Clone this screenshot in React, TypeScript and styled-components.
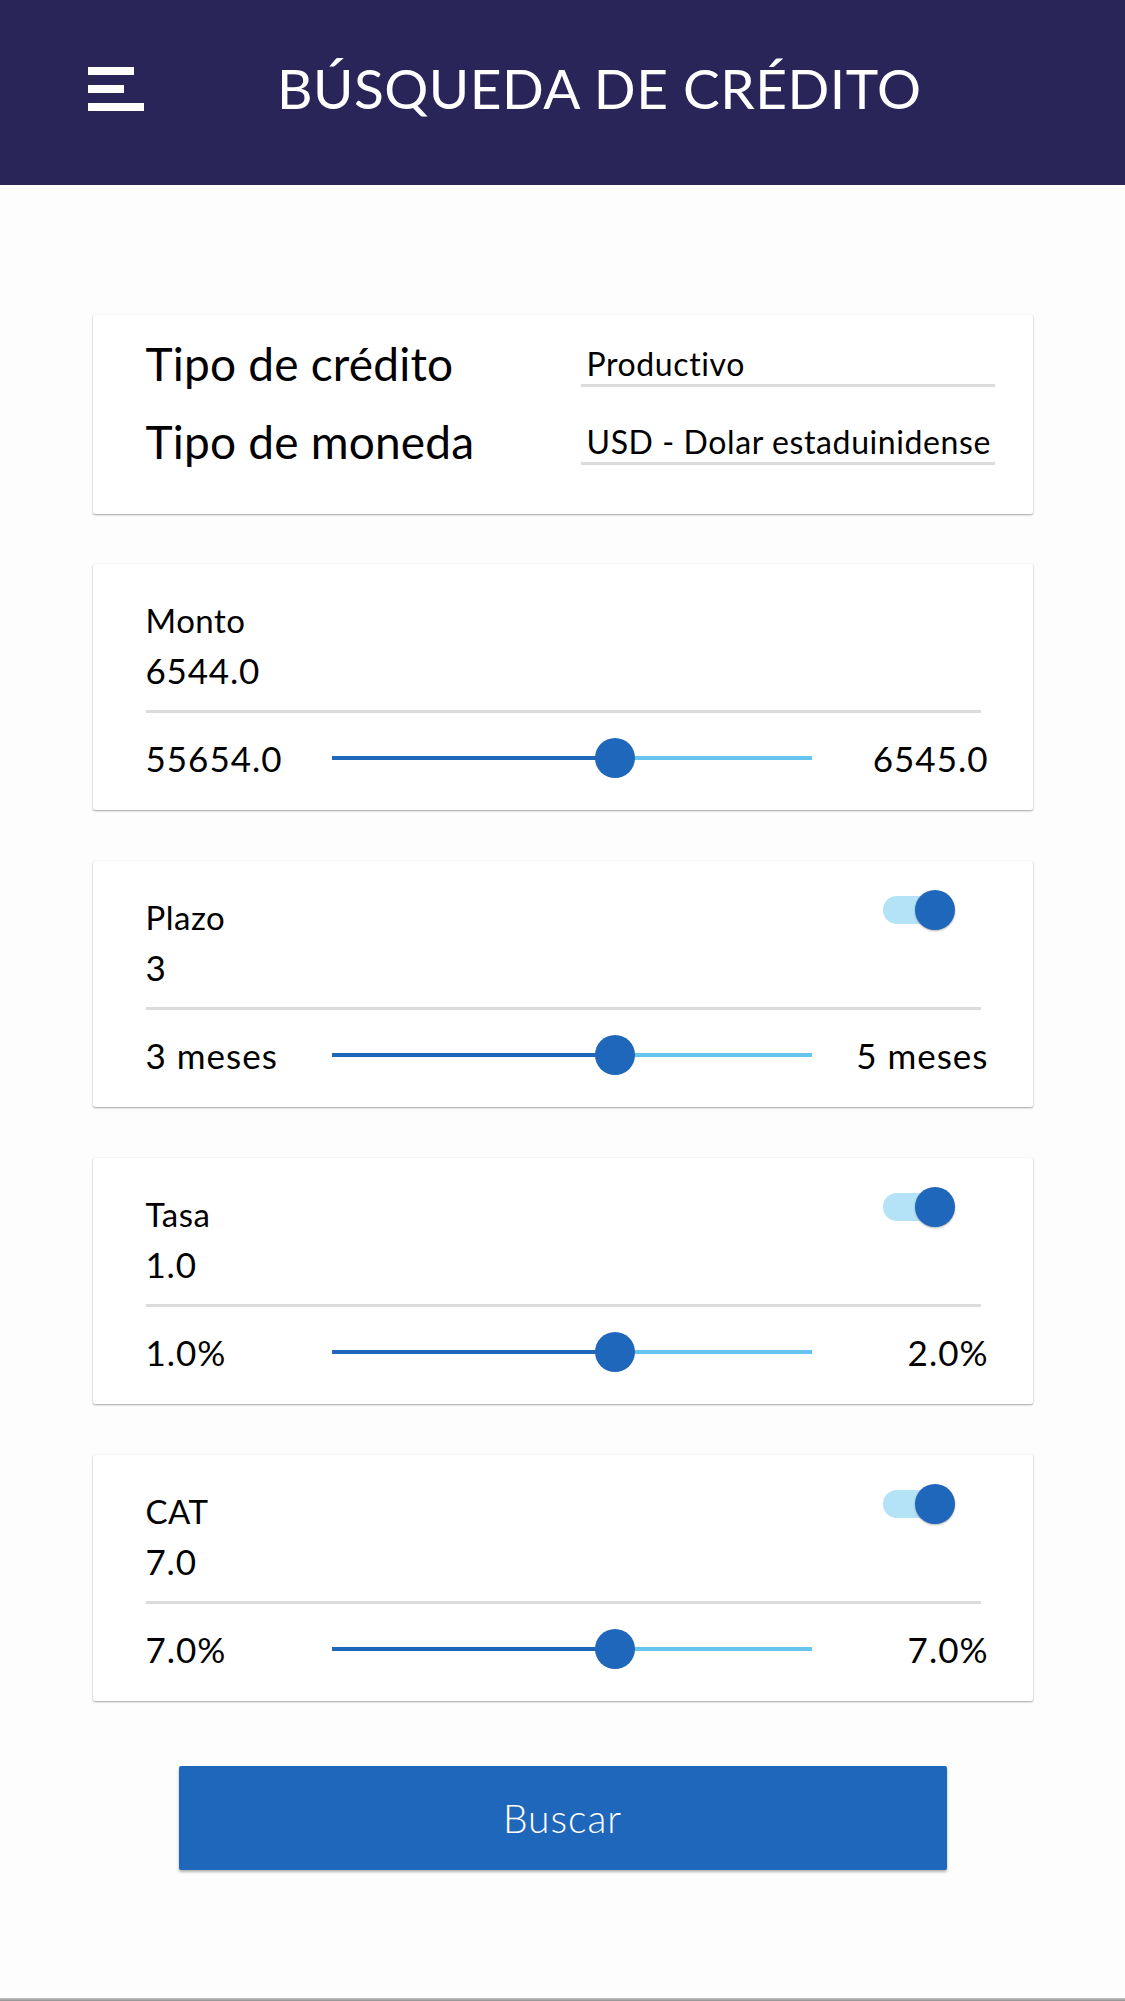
import React from 'react';
import styled, { createGlobalStyle } from 'styled-components';

const GlobalStyle = createGlobalStyle`
  html, body {
    margin: 0;
    padding: 0;
    background: #fdfdfd;
  }
  body {
    font-family: Lato, "Noto Sans", sans-serif;
    color: #000;
  }
  * {
    box-sizing: border-box;
  }
`;

const colors = {
  navy: '#2a2559',
  blue: '#1f67bb',
  lightBlue: '#66c5ee',
  paleBlue: '#b4e2f6',
  line: '#dcdcdc',
};

type RangeCard = {
  label: string;
  value: string;
  min: string;
  max: string;
  position: number;
  toggle?: boolean;
};

const ranges: RangeCard[] = [
  { label: 'Monto', value: '6544.0', min: '55654.0', max: '6545.0', position: 0.59 },
  { label: 'Plazo', value: '3', min: '3 meses', max: '5 meses', position: 0.59, toggle: true },
  { label: 'Tasa', value: '1.0', min: '1.0%', max: '2.0%', position: 0.59, toggle: true },
  { label: 'CAT', value: '7.0', min: '7.0%', max: '7.0%', position: 0.59, toggle: true },
];

const Hamburger: React.FC = () => (
  <MenuButton aria-label="menu">
    <MenuBar $width={46} />
    <MenuBar $width={36} />
    <MenuBar $width={56} />
  </MenuButton>
);

const Switch: React.FC = () => (
  <SwitchTrack>
    <SwitchThumb />
  </SwitchTrack>
);

const Slider: React.FC<{ position: number }> = ({ position }) => (
  <SliderTrack>
    <SliderFill style={{ width: `${position * 100}%` }} />
    <SliderThumb style={{ left: `${position * 100}%` }} />
  </SliderTrack>
);

export default function App() {
  return (
    <Page>
      <GlobalStyle />
      <Header>
        <Hamburger />
        <Title>BÚSQUEDA DE CRÉDITO</Title>
      </Header>
      <Content>
        <SelectCard>
          <SelectRow>
            <SelectLabel>Tipo de crédito</SelectLabel>
            <Field>Productivo</Field>
          </SelectRow>
          <SelectRow>
            <SelectLabel>Tipo de moneda</SelectLabel>
            <Field>USD - Dolar estaduinidense</Field>
          </SelectRow>
        </SelectCard>
        {ranges.map((r) => (
          <SliderCard key={r.label}>
            <LabelRow>
              <FieldLabel>{r.label}</FieldLabel>
              {r.toggle && <Switch />}
            </LabelRow>
            <Value>{r.value}</Value>
            <Divider />
            <SliderRow>
              <RangeText>{r.min}</RangeText>
              <Slider position={r.position} />
              <RangeText $right>{r.max}</RangeText>
            </SliderRow>
          </SliderCard>
        ))}
        <SearchButton>Buscar</SearchButton>
      </Content>
      <BottomEdge />
    </Page>
  );
}

const Page = styled.div`
  display: flex;
  flex-direction: column;
  min-height: 100vh;
`;

const Header = styled.header`
  display: flex;
  align-items: center;
  height: 185px;
  padding: 0 0 8px 88px;
  background: ${colors.navy};
`;

const MenuButton = styled.div`
  display: flex;
  flex-direction: column;
  gap: 10px;
  width: 56px;
`;

const MenuBar = styled.span<{ $width: number }>`
  display: block;
  height: 8px;
  width: ${(p) => p.$width}px;
  background: #fff;
`;

const Title = styled.h1`
  margin: 0 0 0 133px;
  font-size: 55px;
  font-weight: 400;
  line-height: 1;
  color: #fff;
  letter-spacing: 0.5px;
`;

const Content = styled.main`
  display: flex;
  flex-direction: column;
  align-items: center;
  gap: 51px;
  padding-top: 130px;
`;

const Card = styled.section`
  width: 940px;
  background: #fff;
  border-radius: 2px;
  box-shadow: 0 1px 2px rgba(0, 0, 0, 0.35), 0 0 1px rgba(0, 0, 0, 0.12);
`;

const SelectCard = styled(Card)`
  display: flex;
  flex-direction: column;
  gap: 6px;
  height: 199px;
  padding: 0 38px 0 53px;
  margin-bottom: -1px;
`;

const SelectRow = styled.div`
  display: flex;
  align-items: flex-end;
  justify-content: space-between;
  height: 72px;
`;

const SelectLabel = styled.div`
  font-size: 46px;
  line-height: 1;
  letter-spacing: 0.2px;
`;

const Field = styled.div`
  width: 414px;
  padding: 0 0 4px 6px;
  font-size: 32px;
  line-height: 1;
  letter-spacing: 0.6px;
  white-space: nowrap;
  border-bottom: 3px solid ${colors.line};
`;

const SliderCard = styled(Card)`
  height: 246px;
  padding: 28px 52px 0 53px;
`;

const LabelRow = styled.div`
  display: flex;
  justify-content: space-between;
  align-items: flex-start;
  height: 48px;
`;

const FieldLabel = styled.div`
  padding-top: 12px;
  font-size: 33px;
  line-height: 1;
  letter-spacing: 0.5px;
`;

const Value = styled.div`
  margin-top: 13px;
  font-size: 35px;
  line-height: 1;
  letter-spacing: 0.8px;
`;

const Divider = styled.hr`
  margin: 22px 0 0;
  border: 0;
  border-top: 3px solid ${colors.line};
`;

const SliderRow = styled.div`
  display: grid;
  grid-template-columns: 186px 480px 1fr;
  align-items: center;
  height: 90px;
`;

const RangeText = styled.div<{ $right?: boolean }>`
  font-size: 35px;
  line-height: 1;
  letter-spacing: 1px;
  white-space: nowrap;
  text-align: ${(p) => (p.$right ? 'right' : 'left')};
  margin-right: ${(p) => (p.$right ? '-8px' : '0')};
`;

const SliderTrack = styled.div`
  position: relative;
  height: 4px;
  background: ${colors.lightBlue};
`;

const SliderFill = styled.div`
  height: 100%;
  background: ${colors.blue};
`;

const SliderThumb = styled.span`
  position: absolute;
  top: 50%;
  width: 40px;
  height: 40px;
  margin: -20px 0 0 -20px;
  border-radius: 50%;
  background: ${colors.blue};
`;

const SwitchTrack = styled.div`
  position: relative;
  width: 68px;
  height: 28px;
  margin: 7px 30px 0 0;
  border-radius: 14px;
  background: ${colors.paleBlue};
`;

const SwitchThumb = styled.span`
  position: absolute;
  top: -6px;
  left: 32px;
  width: 40px;
  height: 40px;
  border-radius: 50%;
  background: ${colors.blue};
  box-shadow: 0 1px 2px rgba(0, 0, 0, 0.3);
`;

const SearchButton = styled.button`
  width: 768px;
  height: 104px;
  margin-top: 14px;
  border: 0;
  border-radius: 2px;
  background: ${colors.blue};
  color: #fff;
  font-family: Lato, "Noto Sans", sans-serif;
  font-size: 39px;
  font-weight: 300;
  letter-spacing: 1px;
  box-shadow: 0 2px 3px rgba(0, 0, 0, 0.3);
`;

const BottomEdge = styled.div`
  margin-top: auto;
  height: 3px;
  background: linear-gradient(#c4c4c4, #8f8f8f);
`;
